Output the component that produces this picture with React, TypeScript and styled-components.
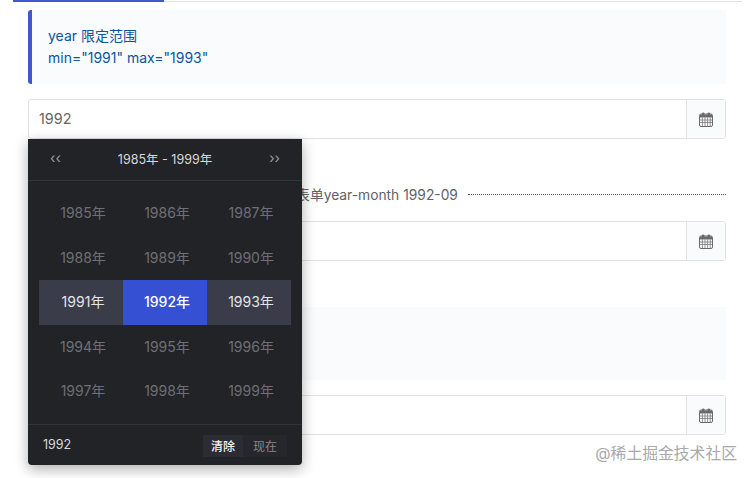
import React from 'react';
import styled, { createGlobalStyle } from 'styled-components';

const Global = createGlobalStyle`
  html, body { margin: 0; padding: 0; background: #fff; }
  body { font-family: Inter, "Noto Sans CJK SC", sans-serif; font-size: 14px; color: #606266; overflow: hidden; height: 478px; }
  * { box-sizing: border-box; }
`;

const Page = styled.div`
  position: relative;
  width: 752px;
  height: 478px;
  overflow: hidden;
`;
const TabLine = styled.div`
  margin: 0 10px 0 13px;
  height: 2px;
  border-bottom: 1px solid #e0e0e3;
  display: flex;
`;
const ActiveTab = styled.div`
  width: 151px;
  height: 2px;
  background: #3f57d0;
`;
const Content = styled.div`
  padding: 8px 26px 0 28px;
  display: flex;
  flex-direction: column;
`;
const Callout = styled.div<{ $mt: number; $h: number; $accent?: boolean }>`
  margin-top: ${p => p.$mt}px;
  height: ${p => p.$h}px;
  padding: 15px 16px;
  background: #f9fbfd;
  border-left: ${p => (p.$accent ? '4px solid #3f57d0' : 'none')};
  border-radius: 3px 0 0 3px;
  color: #0a559c;
  font-size: 14px;
  line-height: 22px;
`;
const Field = styled.div<{ $mt: number }>`
  position: relative;
  margin-top: ${p => p.$mt}px;
  height: 40px;
  display: flex;
  border: 1px solid #e2e2e5;
  border-radius: 3px;
  background: #fff;
`;
const Value = styled.div`
  flex: 1;
  padding-left: 10px;
  line-height: 37px;
  font-size: 14.4px;
  color: #666;
`;
const Addon = styled.div`
  width: 39px;
  border-left: 1px solid #e2e2e5;
  background: #f9fbfc;
  display: flex;
  align-items: center;
  justify-content: center;
`;
const Divider = styled.div`
  margin-top: 45px;
  height: 20px;
  display: flex;
  align-items: center;
  gap: 10px;
  font-size: 13.8px;
  color: #606266;
  white-space: nowrap;
  &::before, &::after {
    content: '';
    flex: 1;
    border-top: 1px dotted #555;
  }
`;
const Popover = styled.div`
  position: absolute;
  left: -1px;
  top: 39px;
  width: 274px;
  height: 326px;
  background: #222327;
  border-radius: 0 0 4px 4px;
  box-shadow: 0 4px 14px rgba(0, 0, 0, 0.32);
  display: flex;
  flex-direction: column;
  z-index: 2;
`;
const PopHeader = styled.div`
  height: 42px;
  flex: none;
  padding: 0 22px 3px;
  display: flex;
  align-items: center;
  justify-content: space-between;
  border-bottom: 1px solid #33343a;
  color: #d8d9dc;
  font-size: 12.5px;
`;
const Nav = styled.span`
  color: #9a9ba0;
  font-size: 14px;
  letter-spacing: 0;
  line-height: 14px;
`;
const YearGrid = styled.div`
  flex: 1;
  padding: 10px 11px 0;
  display: grid;
  grid-template-columns: repeat(3, 84px);
  grid-auto-rows: 44.5px;
  align-content: start;
`;
const Year = styled.div<{ $state: 'off' | 'range' | 'active' }>`
  display: flex;
  align-items: center;
  justify-content: center;
  padding: 0 0 2px 4px;
  font-size: 14px;
  color: ${p => (p.$state === 'off' ? '#6e6f74' : p.$state === 'range' ? '#e4e4e7' : '#fff')};
  font-weight: ${p => (p.$state === 'active' ? 500 : 400)};
  background: ${p => (p.$state === 'active' ? '#3550d2' : p.$state === 'range' ? '#3a3c4a' : 'transparent')};
`;
const PopFooter = styled.div`
  height: 41px;
  flex: none;
  padding: 0 15px 1px;
  display: flex;
  align-items: center;
  justify-content: space-between;
  border-top: 1px solid #33343a;
  color: #d8d9dc;
  font-size: 12.5px;
`;
const FooterButtons = styled.div`
  display: flex;
  margin-top: 2px;
`;
const FooterButton = styled.div<{ $on?: boolean }>`
  width: ${p => (p.$on ? 40 : 44)}px;
  height: 22px;
  display: flex;
  align-items: center;
  justify-content: center;
  font-size: 12px;
  background: ${p => (p.$on ? '#2b2d35' : '#26272d')};
  color: ${p => (p.$on ? '#f5f5f7' : '#85868c')};
  font-weight: ${p => (p.$on ? 500 : 400)};
`;
const Watermark = styled.div`
  position: absolute;
  right: 15px;
  top: 443px;
  font-size: 15.8px;
  line-height: 22px;
  color: #a9a9ab;
`;

const CalendarIcon = () => (
  <svg width="14" height="15" viewBox="0 0 14 15" aria-hidden="true">
    <rect x="0.5" y="2" width="13" height="12.5" rx="1.5" fill="#fff" stroke="#6a6a6e" />
    <path d="M1 2.5h12v3H1z" fill="#6a6a6e" />
    <rect x="3" y="0.5" width="2.4" height="3.5" rx="1" fill="#6a6a6e" />
    <rect x="8.6" y="0.5" width="2.4" height="3.5" rx="1" fill="#6a6a6e" />
    <path d="M1 8h12M1 10.5h12M3.4 5.5v8.5M6 5.5v8.5M8.6 5.5v8.5M11.2 5.5v8.5" stroke="#77777b" strokeWidth="0.8" fill="none" />
  </svg>
);

const years = Array.from({ length: 15 }, (_, i) => 1985 + i);
const stateOf = (y: number) => (y === 1992 ? 'active' : y === 1991 || y === 1993 ? 'range' : 'off');

export default function App() {
  return (
    <Page>
      <Global />
      <TabLine>
        <ActiveTab />
      </TabLine>
      <Content>
        <Callout $mt={0} $h={74} $accent>
          year 限定范围
          <br />
          min="1991" max="1993"
        </Callout>
        <Field $mt={15}>
          <Value>1992</Value>
          <Addon>
            <CalendarIcon />
          </Addon>
          <Popover>
            <PopHeader>
              <Nav>‹‹</Nav>
              <span>1985年 - 1999年</span>
              <Nav>››</Nav>
            </PopHeader>
            <YearGrid>
              {years.map(y => (
                <Year key={y} $state={stateOf(y)}>
                  {y}年
                </Year>
              ))}
            </YearGrid>
            <PopFooter>
              <span>1992</span>
              <FooterButtons>
                <FooterButton $on>清除</FooterButton>
                <FooterButton>现在</FooterButton>
              </FooterButtons>
            </PopFooter>
          </Popover>
        </Field>
        <Divider>表单year-month 1992-09</Divider>
        <Field $mt={17}>
          <Value>1992-09</Value>
          <Addon>
            <CalendarIcon />
          </Addon>
        </Field>
        <Callout $mt={46} $h={73} />
        <Field $mt={15}>
          <Value />
          <Addon>
            <CalendarIcon />
          </Addon>
        </Field>
      </Content>
      <Watermark>@稀土掘金技术社区</Watermark>
    </Page>
  );
}
